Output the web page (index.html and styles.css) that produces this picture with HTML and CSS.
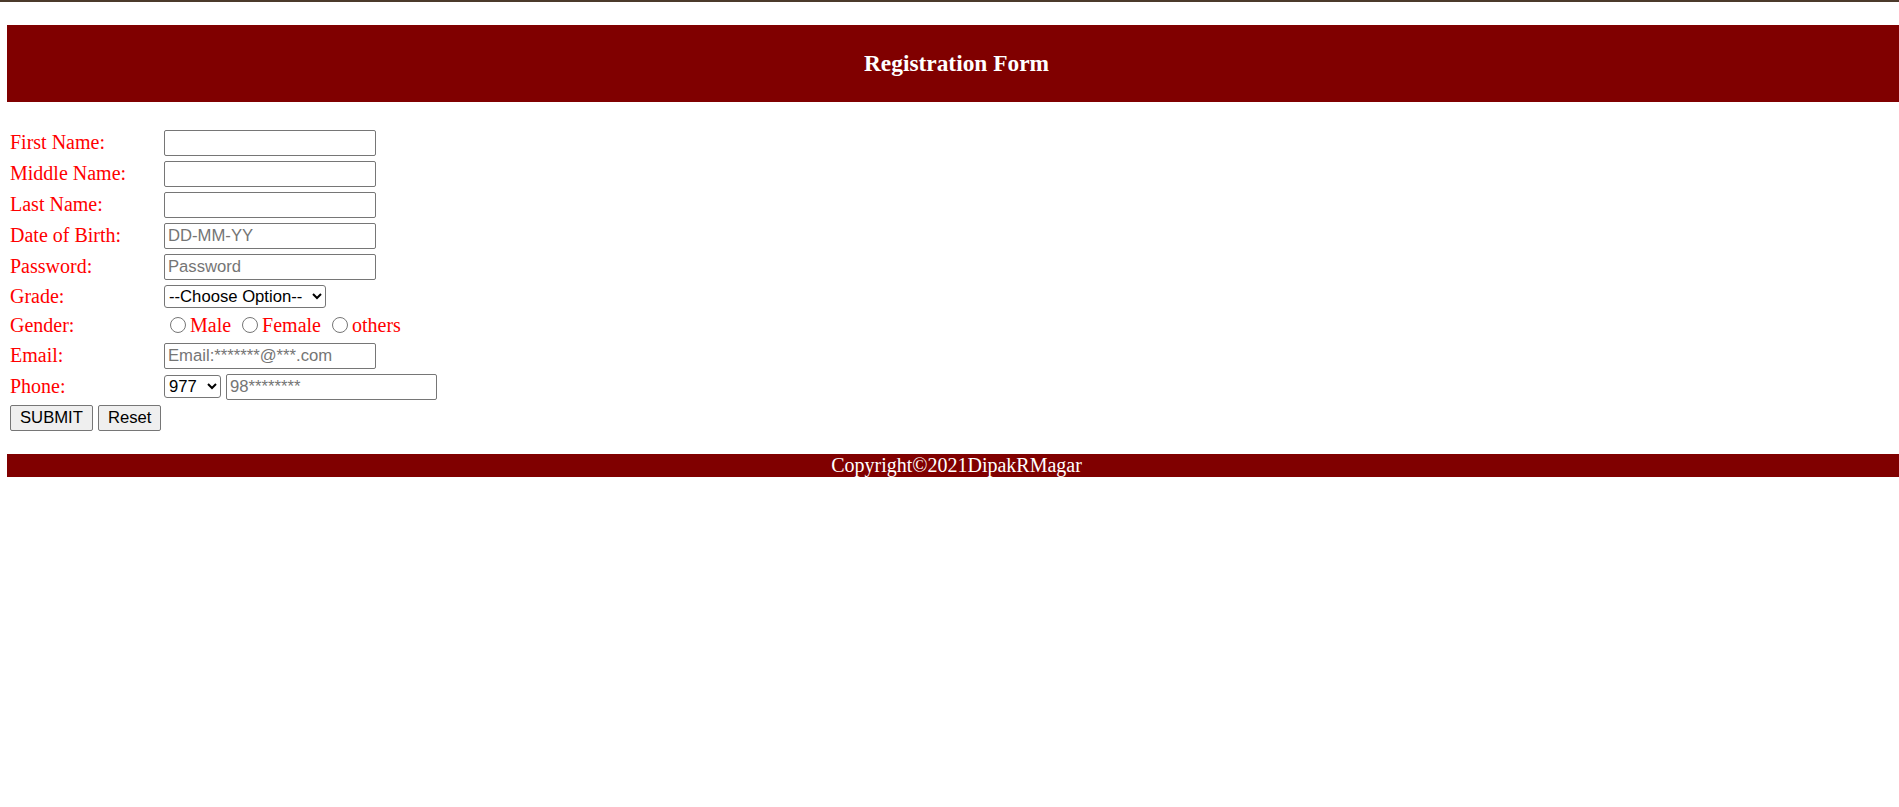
FILE: index.html
```html
<!DOCTYPE html>
<html>
<head>
<meta charset="utf-8">
<title>Registration Form</title>
<link rel="stylesheet" href="styles.css">
</head>
<body>
<div class="topline"></div>
<header class="banner"><h1 class="banner-title">Registration Form</h1></header>
<form class="form">
  <label class="lbl">First Name:</label>
  <div class="cell"><input class="txt" type="text"></div>
  <label class="lbl">Middle Name:</label>
  <div class="cell"><input class="txt" type="text"></div>
  <label class="lbl">Last Name:</label>
  <div class="cell"><input class="txt" type="text"></div>
  <label class="lbl">Date of Birth:</label>
  <div class="cell"><input class="txt" type="text" placeholder="DD-MM-YY"></div>
  <label class="lbl">Password:</label>
  <div class="cell"><input class="txt" type="password" placeholder="Password"></div>
  <label class="lbl">Grade:</label>
  <div class="cell"><select class="sel sel-grade"><option>--Choose Option--</option></select></div>
  <label class="lbl">Gender:</label>
  <div class="cell gender"><input class="radio" type="radio" name="g">Male <input class="radio" type="radio" name="g">Female <input class="radio" type="radio" name="g">others</div>
  <label class="lbl">Email:</label>
  <div class="cell"><input class="txt" type="email" placeholder="Email:*******@***.com"></div>
  <label class="lbl">Phone:</label>
  <div class="cell phone"><select class="sel sel-code"><option>977</option></select><input class="txt txt-phone" type="text" placeholder="98********"></div>
  <div class="buttons"><button class="btn" type="submit">SUBMIT</button><button class="btn" type="reset">Reset</button></div>
</form>
<footer class="foot">Copyright©2021DipakRMagar</footer>
</body>
</html>
```

FILE: styles.css
```css
html, body {
  margin: 0;
  padding: 0;
  overflow: hidden;
  background: #ffffff;
  font-family: "Liberation Serif", "Times New Roman", serif;
}

.topline {
  height: 2px;
  background: #4b3a2b;
}

.banner {
  margin: 23px 0 0 7px;
  width: 1899px;
  height: 77px;
  background: #800000;
  display: flex;
  align-items: center;
  justify-content: center;
}

.banner-title {
  margin: 0;
  color: #ffffff;
  font-size: 23.4px;
  font-weight: bold;
  line-height: 27px;
}

.form {
  margin: 25px 0 0 10px;
  display: grid;
  grid-template-columns: 154px auto;
  grid-template-rows: 31px 31px 31px 31px 31px 29px 29px 31px 31px 31px;
  align-items: center;
}

.lbl {
  color: #ff0000;
  font-size: 20px;
  line-height: 23px;
}

.cell {
  display: flex;
  align-items: center;
}

.txt {
  box-sizing: border-box;
  width: 212px;
  height: 26px;
  margin: 0;
  padding: 1px 3px;
  border: 1px solid #767676;
  border-radius: 2px;
  font-family: "Liberation Sans", Arial, sans-serif;
  font-size: 16.67px;
  color: #000;
}

.txt::placeholder {
  color: #757575;
}

.sel {
  box-sizing: border-box;
  height: 23px;
  margin: 0;
  border: 1px solid #767676;
  border-radius: 3px;
  background: #fff;
  font-family: "Liberation Sans", Arial, sans-serif;
  font-size: 16.67px;
  color: #000;
}

.sel-grade {
  width: 162px;
}

.sel-code {
  width: 57px;
}

.txt-phone {
  width: 211px;
  margin-left: 5px;
}

.gender {
  display: block;
  color: #ff0000;
  font-size: 20px;
  line-height: 23px;
}

.radio {
  width: 16px;
  height: 16px;
  margin: 3px 4px 0 6px;
  vertical-align: top;
}

.buttons {
  grid-column: 1 / span 2;
  display: flex;
  gap: 5px;
}

.btn {
  box-sizing: border-box;
  height: 26px;
  margin: 0;
  padding: 1px 9px;
  border: 1px solid #767676;
  border-radius: 2px;
  background: #efefef;
  font-family: "Liberation Sans", Arial, sans-serif;
  font-size: 16.67px;
  color: #000;
}

.foot {
  margin: 21px 0 0 7px;
  width: 1899px;
  height: 23px;
  line-height: 23px;
  background: #800000;
  color: #ffffff;
  font-size: 20px;
  text-align: center;
}
```
